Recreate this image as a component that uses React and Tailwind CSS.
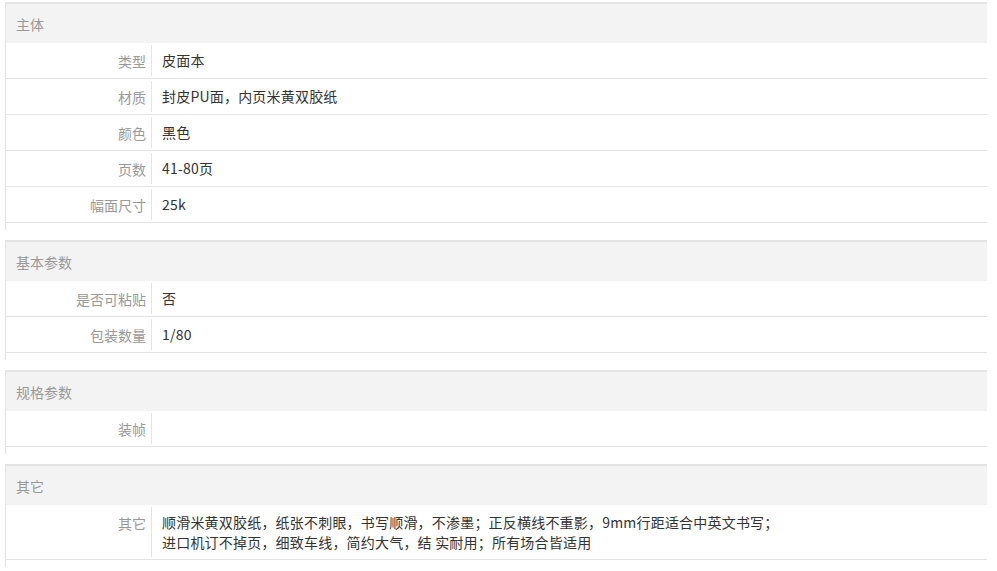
const sections = [
  { title: '主体', rows: [['类型', '皮面本'], ['材质', '封皮PU面，内页米黄双胶纸'], ['颜色', '黑色'], ['页数', '41-80页'], ['幅面尺寸', '25k']] },
  { title: '基本参数', rows: [['是否可粘贴', '否'], ['包装数量', '1/80']] },
  { title: '规格参数', rows: [['装帧', '']] },
  { title: '其它', rows: [['其它', '顺滑米黄双胶纸，纸张不刺眼，书写顺滑，不渗墨；正反横线不重影，9mm行距适合中英文书写；进口机订不掉页，细致车线，简约大气，结 实耐用；所有场合皆适用']] },
];

export default function App() {
  return (
    <div className="w-[997px] h-[571px] overflow-hidden bg-white pt-[2px] pl-[5px] text-[14px] leading-[20px]" style={{ fontFamily: '"Noto Sans CJK SC", "Liberation Sans", sans-serif' }}>
      <div className="w-[982px] flex flex-col gap-[10px]">
        {sections.map((s) => (
          <div key={s.title} className="border-t-2 border-[#e4e4e4] border-l border-l-[#e4e4e4] pb-[7px]">
            <div className="h-[39px] bg-[#f3f3f3] text-[#999] flex items-center pl-[10px]">{s.title}</div>
            {s.rows.map(([k, v]) => (
              <div key={k} className="flex min-h-[36px] border-b border-[#e4e4e4]">
                <div className="w-[146px] shrink-0 text-right text-[#999] pr-[5px] pt-[6px] border-r border-[#e4e4e4] my-[2px]">{k}</div>
                <div className="pl-[10px] w-[640px] py-[7px] text-[#333] tracking-[0.2px]">{v}</div>
              </div>
            ))}
          </div>
        ))}
      </div>
    </div>
  );
}
